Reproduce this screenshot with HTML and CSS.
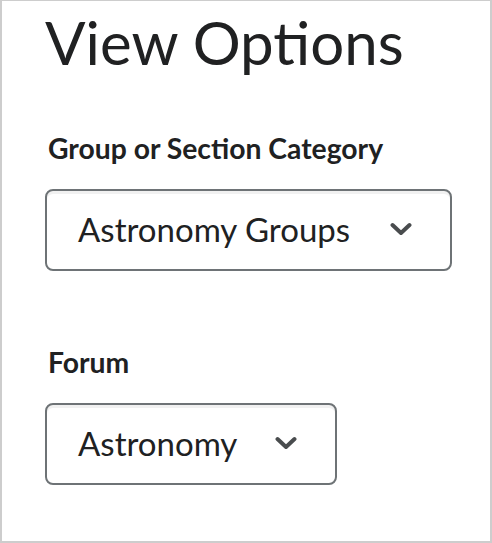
FILE: index.html
```html
<!DOCTYPE html>
<html>
<head>
<meta charset="utf-8">
<link rel="stylesheet" href="styles.css">
</head>
<body>
<div class="frame">
  <h1 class="title">View Options</h1>
  <div class="field">
    <label class="label">Group or Section Category</label>
    <div class="select wide">
      <span class="value">Astronomy Groups</span>
      <svg class="chev" width="22" height="14" viewBox="0 0 22 14"><path d="M2.5 3 L11 11 L19.5 3" fill="none" stroke="#494c4e" stroke-width="4" stroke-linecap="round" stroke-linejoin="round"/></svg>
    </div>
  </div>
  <div class="field second">
    <label class="label">Forum</label>
    <div class="select narrow">
      <span class="value">Astronomy</span>
      <svg class="chev" width="22" height="14" viewBox="0 0 22 14"><path d="M2.5 3 L11 11 L19.5 3" fill="none" stroke="#494c4e" stroke-width="4" stroke-linecap="round" stroke-linejoin="round"/></svg>
    </div>
  </div>
</div>
</body>
</html>
```
FILE: styles.css
```css
html, body {
  margin: 0;
  padding: 0;
  background: #fff;
}
body {
  font-family: Lato, "Noto Sans", sans-serif;
  color: #202122;
}
.frame {
  box-sizing: border-box;
  width: 492px;
  height: 543px;
  border-style: solid;
  border-color: #cdcdcd;
  border-width: 1px 2px 2px 2px;
  padding: 11px 0 0 43px;
}
.title {
  margin: 0;
  font-size: 60px;
  font-weight: 400;
  line-height: 60px;
  color: #202122;
}
.field {
  margin-top: 59px;
}
.field.second {
  margin-top: 74px;
}
.label {
  display: block;
  font-size: 28.3px;
  font-weight: 700;
  line-height: 34px;
  margin-left: 3px;
  color: #202122;
}
.select {
  box-sizing: border-box;
  margin-top: 24px;
  height: 82px;
  border: 2px solid #6e7376;
  border-radius: 8px;
  box-shadow: inset 0 3px 0 0 #f1f1f1;
  display: flex;
  align-items: center;
  justify-content: space-between;
  padding: 0 38px 2px 31px;
}
.select.wide { width: 407px; }
.select.narrow { width: 292px; }
.value {
  font-size: 33px;
  line-height: 40px;
}
.chev {
  display: block;
}
```
